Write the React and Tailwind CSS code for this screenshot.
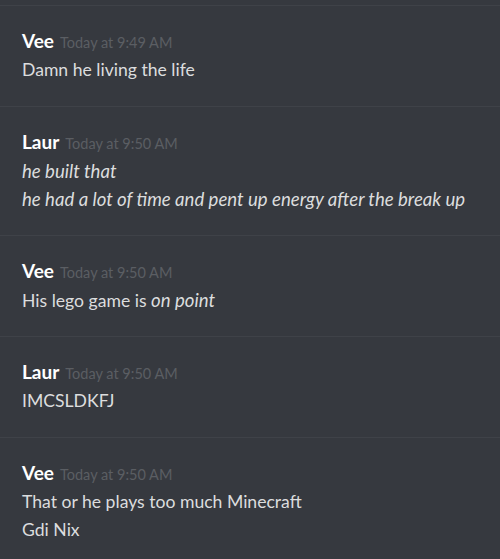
import React from 'react';

const messages = [
  { author: 'Vee', time: 'Today at 9:49 AM', lines: [<>Damn he living the life</>] },
  {
    author: 'Laur',
    time: 'Today at 9:50 AM',
    lines: [
      <em className="text-[18.6px]">he built that</em>,
      <em className="text-[18.6px]">he had a lot of time and pent up energy after the break up</em>,
    ],
  },
  { author: 'Vee', time: 'Today at 9:50 AM', lines: [<>His lego game is <em className="text-[18.6px]">on point</em></>] },
  { author: 'Laur', time: 'Today at 9:50 AM', lines: [<>IMCSLDKFJ</>] },
  {
    author: 'Vee',
    time: 'Today at 9:50 AM',
    lines: [<>That or he plays too much Minecraft</>, <>Gdi Nix</>],
  },
];

function Message({ author, time, lines }) {
  return (
    <div className="border-t border-[#3f4248] pt-[25px] pb-[22px] pl-[22px]">
      <div className="flex items-baseline h-[20px] leading-[20px]">
        <span className="text-white font-bold text-[19px]">{author}</span>
        <span className="ml-[6px] text-[14.5px] text-[#5b5e63]">{time}</span>
      </div>
      <div className="mt-[5px] text-[#dcddde] text-[17.6px] leading-[28px]">
        {lines.map((line, i) => (
          <div key={i} className="h-[28px] whitespace-nowrap">{line}</div>
        ))}
      </div>
    </div>
  );
}

export default function App() {
  return (
    <div
      className="h-[559px] w-[500px] overflow-hidden bg-[#36393f] pt-[5px]"
      style={{ fontFamily: 'Lato, "Open Sans", sans-serif' }}
    >
      {messages.map((m, i) => (
        <Message key={i} {...m} />
      ))}
    </div>
  );
}
